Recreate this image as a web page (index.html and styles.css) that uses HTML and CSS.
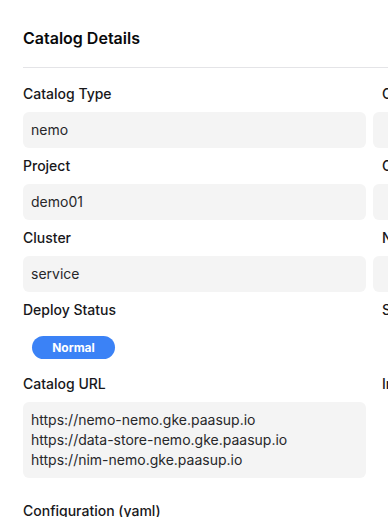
FILE: index.html
```html
<!DOCTYPE html>
<html lang="en">
<head>
    <meta charset="UTF-8">
    <meta name="viewport" content="width=device-width, initial-scale=1.0">
    <title>Catalog Details</title>
    <link rel="stylesheet" href="styles.css">
</head>
<body>
    <div class="panel">
        <div class="panel-header">
            <h2>Catalog Details</h2>
        </div>

        <div class="panel-body">
            <div class="field-grid">
                <div class="field">
                    <label>Catalog Type</label>
                    <div class="value">nemo</div>
                </div>
                <div class="field right">
                    <label>Catalog Version</label>
                    <div class="value"></div>
                </div>

                <div class="field">
                    <label>Project</label>
                    <div class="value">demo01</div>
                </div>
                <div class="field right">
                    <label>Created</label>
                    <div class="value"></div>
                </div>

                <div class="field">
                    <label>Cluster</label>
                    <div class="value">service</div>
                </div>
                <div class="field right">
                    <label>Namespace</label>
                    <div class="value"></div>
                </div>

                <div class="field">
                    <label>Deploy Status</label>
                    <div class="status-wrap">
                        <span class="badge">Normal</span>
                    </div>
                </div>
                <div class="field right">
                    <label>Status</label>
                    <div class="status-wrap"></div>
                </div>

                <div class="field">
                    <label>Catalog URL</label>
                    <div class="value multi">
                        https://nemo-nemo.gke.paasup.io<br>
                        https://data-store-nemo.gke.paasup.io<br>
                        https://nim-nemo.gke.paasup.io
                    </div>
                </div>
                <div class="field right">
                    <label>Ingress</label>
                </div>
            </div>

            <div class="section">
                <label>Configuration (yaml)</label>
            </div>
        </div>
    </div>
</body>
</html>
```

FILE: styles.css
```css
* {
    margin: 0;
    padding: 0;
    box-sizing: border-box;
}

html, body {
    overflow: hidden;
}

body {
    background-color: #fff;
    color: #18181b;
    font-family: Inter, 'Noto Sans', sans-serif;
    font-size: 14px;
    line-height: 20px;
}

.panel {
    width: 760px;
    padding-left: 23px;
}

.panel-header {
    padding: 26px 0 17px;
    border-bottom: 1px solid #e4e4e7;
}

.panel-header h2 {
    font-size: 16px;
    line-height: 24px;
    font-weight: 600;
    color: #09090b;
}

.panel-body {
    padding-top: 16px;
}

.field-grid {
    display: grid;
    grid-template-columns: 343px 343px;
    column-gap: 7px;
    row-gap: 8px;
}

.field label,
.section label {
    display: block;
    font-weight: 500;
    color: #18181b;
    margin-bottom: 8px;
}

.field.right label {
    padding-left: 9px;
}

.value {
    background-color: #f4f4f4;
    border-radius: 6px;
    height: 36px;
    padding: 8px 8px;
    color: #27272a;
}

.value.multi {
    height: auto;
    padding: 8px 8px;
}

.status-wrap {
    height: 38px;
    display: flex;
    align-items: center;
    padding-left: 9px;
}

.badge {
    display: inline-block;
    background-color: #3b82f6;
    color: #fff;
    font-size: 12px;
    font-weight: 700;
    line-height: 23px;
    width: 83px;
    text-align: center;
    border-radius: 999px;
}

.section {
    margin-top: 23px;
}
```
